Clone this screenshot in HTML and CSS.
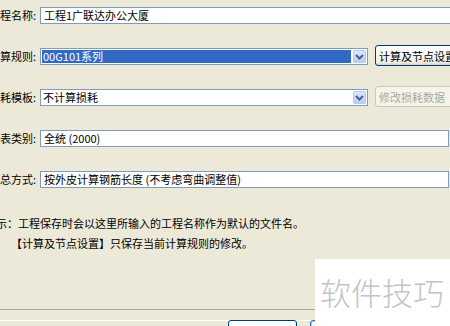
FILE: index.html
```html
<!DOCTYPE html>
<html lang="zh-CN">
<head>
  <meta charset="UTF-8" />
  <title>工程信息</title>
  <link rel="stylesheet" href="styles.css">
</head>
<body>
  <div class="dialog">
    <div class="fields">
      <div class="row">
        <span class="label">程名称:</span>
        <div class="textbox wide">工程1广联达办公大厦</div>
      </div>

      <div class="row">
        <span class="label">算规则:</span>
        <div class="combo">
          <span class="combo-value selected">00G101系列</span>
          <span class="combo-arrow">
            <svg width="9" height="6" viewBox="0 0 9 6"><polyline points="1,1 4.5,4.5 8,1" fill="none" stroke="#4d6185" stroke-width="2"/></svg>
          </span>
        </div>
        <button class="xp-button">计算及节点设置</button>
      </div>

      <div class="row">
        <span class="label">耗模板:</span>
        <div class="combo">
          <span class="combo-value">不计算损耗</span>
          <span class="combo-arrow">
            <svg width="9" height="6" viewBox="0 0 9 6"><polyline points="1,1 4.5,4.5 8,1" fill="none" stroke="#4d6185" stroke-width="2"/></svg>
          </span>
        </div>
        <button class="xp-button" disabled>修改损耗数据</button>
      </div>

      <div class="row">
        <span class="label">表类别:</span>
        <div class="textbox">全统 (2000)</div>
      </div>

      <div class="row">
        <span class="label">总方式:</span>
        <div class="textbox">按外皮计算钢筋长度 (不考虑弯曲调整值)</div>
      </div>
    </div>

    <div class="hint">
      <p class="hint-first">示：工程保存时会以这里所输入的工程名称作为默认的文件名。</p>
      <p class="hint-second">【计算及节点设置】只保存当前计算规则的修改。</p>
    </div>

    <div class="footer">
      <button class="xp-button footer-btn"></button>
      <button class="xp-button footer-btn default"></button>
    </div>
  </div>

  <div class="watermark">软件技巧</div>
</body>
</html>
```

FILE: styles.css
```css
* {
  box-sizing: border-box;
  margin: 0;
  padding: 0;
}

body {
  width: 450px;
  height: 326px;
  overflow: hidden;
  background: #ece9d8;
  font-family: "Noto Sans CJK SC", "Liberation Sans", sans-serif;
  font-size: 11px;
  color: #000;
  position: relative;
}

.fields {
  padding-top: 7px;
  display: flex;
  flex-direction: column;
  gap: 24px;
}

.row {
  display: flex;
  align-items: center;
  height: 17px;
  white-space: nowrap;
}

.label {
  width: 40px;
  flex-shrink: 0;
  line-height: 17px;
}

.textbox {
  width: 409px;
  height: 17px;
  flex-shrink: 0;
  background: #fff;
  border: 1px solid #7f9db9;
  padding-left: 3px;
  line-height: 15px;
}

.textbox.wide {
  width: 420px;
  border-right: none;
}

.combo {
  width: 328px;
  height: 17px;
  flex-shrink: 0;
  display: flex;
  gap: 2px;
  background: #fff;
  border: 1px solid #7f9db9;
  padding: 1px;
}

.combo-value {
  flex: 1;
  padding-left: 1px;
  line-height: 13px;
}

.combo-value.selected {
  background: #316ac5;
  color: #fff;
}

.combo-arrow {
  width: 13px;
  display: flex;
  align-items: center;
  justify-content: center;
  background: linear-gradient(#dce6fc, #b9cdf7);
  border: 1px solid #b4c8f6;
  border-radius: 2px;
}

.xp-button {
  flex-shrink: 0;
  margin-left: 7px;
  width: 90px;
  height: 21px;
  margin-top: -2px;
  text-align: left;
  padding-left: 3px;
  font-family: inherit;
  font-size: 11px;
  color: #000;
  background: linear-gradient(#fefefe, #f0f0ea 85%, #d6d0c5);
  border: 1px solid #003c74;
  border-radius: 3px;
}

.xp-button:disabled {
  color: #aca899;
  background: #f5f4ea;
  border-color: #c9c7ba;
}

.hint {
  margin-top: 25px;
  line-height: 20px;
}

.hint-first {
  margin-left: -4px;
}

.hint-second {
  margin-left: 11px;
}

.footer {
  margin-top: 56px;
  border-top: 1px solid #aca899;
  border-bottom: 1px solid #fff;
  height: 2px;
  display: flex;
  padding-left: 228px;
  padding-top: 10px;
  gap: 13px;
  overflow: visible;
}

.footer-btn {
  margin: 0;
  width: 69px;
  height: 21px;
  flex-shrink: 0;
}

.footer-btn.default {
  border-color: #3c6ec9;
  box-shadow: inset 0 0 0 1px #a8c4f0;
}

.watermark {
  position: absolute;
  left: 315px;
  top: 259px;
  width: 135px;
  height: 67px;
  background: #fff;
  color: #c4c4c4;
  font-size: 31px;
  font-weight: 300;
  padding: 13px 0 0 5px;
  line-height: 40px;
  letter-spacing: 0;
}
```
